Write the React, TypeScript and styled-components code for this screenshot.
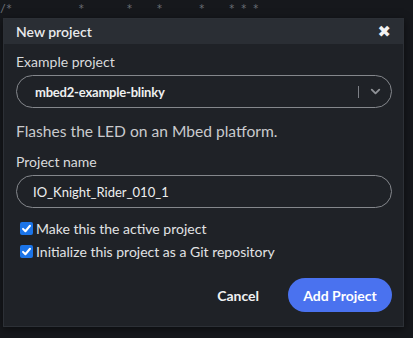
import React, { useState } from 'react';
import styled, { createGlobalStyle } from 'styled-components';
import { ChevronDown } from 'lucide-react';

const GlobalStyle = createGlobalStyle`
  html, body {
    margin: 0;
    padding: 0;
    background: #16181c;
    font-family: Lato, "Open Sans", "Liberation Sans", sans-serif;
  }
  * { box-sizing: border-box; }
`;

const Editor = styled.div`
  position: relative;
  width: 413px;
  height: 338px;
  overflow: hidden;
  background: #16181c;
`;

const CodeLine = styled.div`
  height: 18px;
  padding: 3px 0 0 0;
  font-family: "DejaVu Sans Mono", monospace;
  font-size: 10px;
  color: #6b6f76;
  white-space: pre;
`;

const Dialog = styled.div`
  position: absolute;
  top: 18px;
  left: 3px;
  width: 401px;
  height: 309px;
  background: #1f2227;
  border: 1px solid #2c3036;
  box-shadow: 0 2px 8px rgba(0, 0, 0, 0.5);
  display: flex;
  flex-direction: column;
`;

const Header = styled.div`
  height: 25px;
  background: #2a2e34;
  display: flex;
  align-items: center;
  justify-content: space-between;
  padding: 0 12px 0 12px;
`;

const Title = styled.div`
  font-size: 14px;
  font-weight: 600;
  color: #e9eaec;
`;

const Close = styled.button`
  border: none;
  background: none;
  padding: 0;
  color: #f2f2f2;
  font-family: "DejaVu Sans", sans-serif;
  font-size: 16px;
  font-weight: 700;
  line-height: 1;
  cursor: pointer;
`;

const Body = styled.div`
  padding: 9px 11px 0 12px;
  display: flex;
  flex-direction: column;
`;

const Label = styled.div`
  font-size: 14px;
  color: #d9dadc;
  line-height: 18px;
`;

const Pill = styled.div`
  margin-top: 4px;
  height: 33px;
  border: 1px solid #84878c;
  border-radius: 17px;
  display: flex;
  align-items: center;
  padding: 0 8px 0 0;
`;

const PillText = styled.span<{ $bold?: boolean }>`
  flex: 1;
  padding-left: ${p => (p.$bold ? 18 : 16)}px;
  font-size: 13px;
  font-weight: ${p => (p.$bold ? 700 : 400)};
  letter-spacing: ${p => (p.$bold ? '-0.2px' : '0')};
  color: #eeeff0;
`;

const Divider = styled.div`
  width: 1px;
  height: 12px;
  background: #7d8086;
  margin-right: 9px;
`;

const Description = styled.div`
  margin-top: 13px;
  font-size: 15.6px;
  color: #c9cacd;
  line-height: 20px;
`;

const Section = styled.div<{ $mt: number }>`
  margin-top: ${p => p.$mt}px;
`;

const CheckRow = styled.label`
  display: flex;
  align-items: center;
  gap: 3px;
  margin-left: 4px;
  height: 23px;
  font-size: 14px;
  color: #e1e2e4;
  cursor: pointer;
`;

const Box = styled.span`
  width: 13px;
  height: 13px;
  border-radius: 2px;
  background: #1b74e8;
  display: flex;
  align-items: center;
  justify-content: center;
`;

const Footer = styled.div`
  margin-top: 15px;
  display: flex;
  justify-content: flex-end;
  align-items: center;
  gap: 29px;
`;

const TextButton = styled.button`
  border: none;
  background: none;
  color: #f1f2f3;
  font-family: inherit;
  font-size: 14px;
  font-weight: 700;
  padding: 0;
  cursor: pointer;
`;

const PrimaryButton = styled.button`
  border: none;
  background: #4a72ef;
  color: #ffffff;
  font-family: inherit;
  font-size: 14px;
  font-weight: 700;
  height: 34px;
  width: 104px;
  border-radius: 17px;
  cursor: pointer;
`;

const Check = () => (
  <svg width="11" height="11" viewBox="0 0 12 12">
    <path d="M2.2 6.4 L4.8 9 L9.8 3" fill="none" stroke="#fff" strokeWidth="2.2" strokeLinecap="round" strokeLinejoin="round" />
  </svg>
);

const App = () => {
  const [active, setActive] = useState(true);
  const [git, setGit] = useState(true);

  return (
    <>
      <GlobalStyle />
      <Editor>
        <CodeLine>{'/*           *       *    *      *    * * *'}</CodeLine>
        <Dialog>
          <Header>
            <Title>New project</Title>
            <Close>✖</Close>
          </Header>
          <Body>
            <Label>Example project</Label>
            <Pill>
              <PillText $bold>mbed2-example-blinky</PillText>
              <Divider />
              <ChevronDown size={15} strokeWidth={3} color="#8e9196" />
            </Pill>
            <Description>Flashes the LED on an Mbed platform.</Description>
            <Section $mt={12}>
              <Label>Project name</Label>
              <Pill>
                <PillText>IO_Knight_Rider_010_1</PillText>
              </Pill>
            </Section>
            <Section $mt={9}>
              <CheckRow onClick={() => setActive(!active)}>
                <Box>{active && <Check />}</Box>
                Make this the active project
              </CheckRow>
              <CheckRow onClick={() => setGit(!git)}>
                <Box>{git && <Check />}</Box>
                Initialize this project as a Git repository
              </CheckRow>
            </Section>
            <Footer>
              <TextButton>Cancel</TextButton>
              <PrimaryButton>Add Project</PrimaryButton>
            </Footer>
          </Body>
        </Dialog>
      </Editor>
    </>
  );
};

export default App;
